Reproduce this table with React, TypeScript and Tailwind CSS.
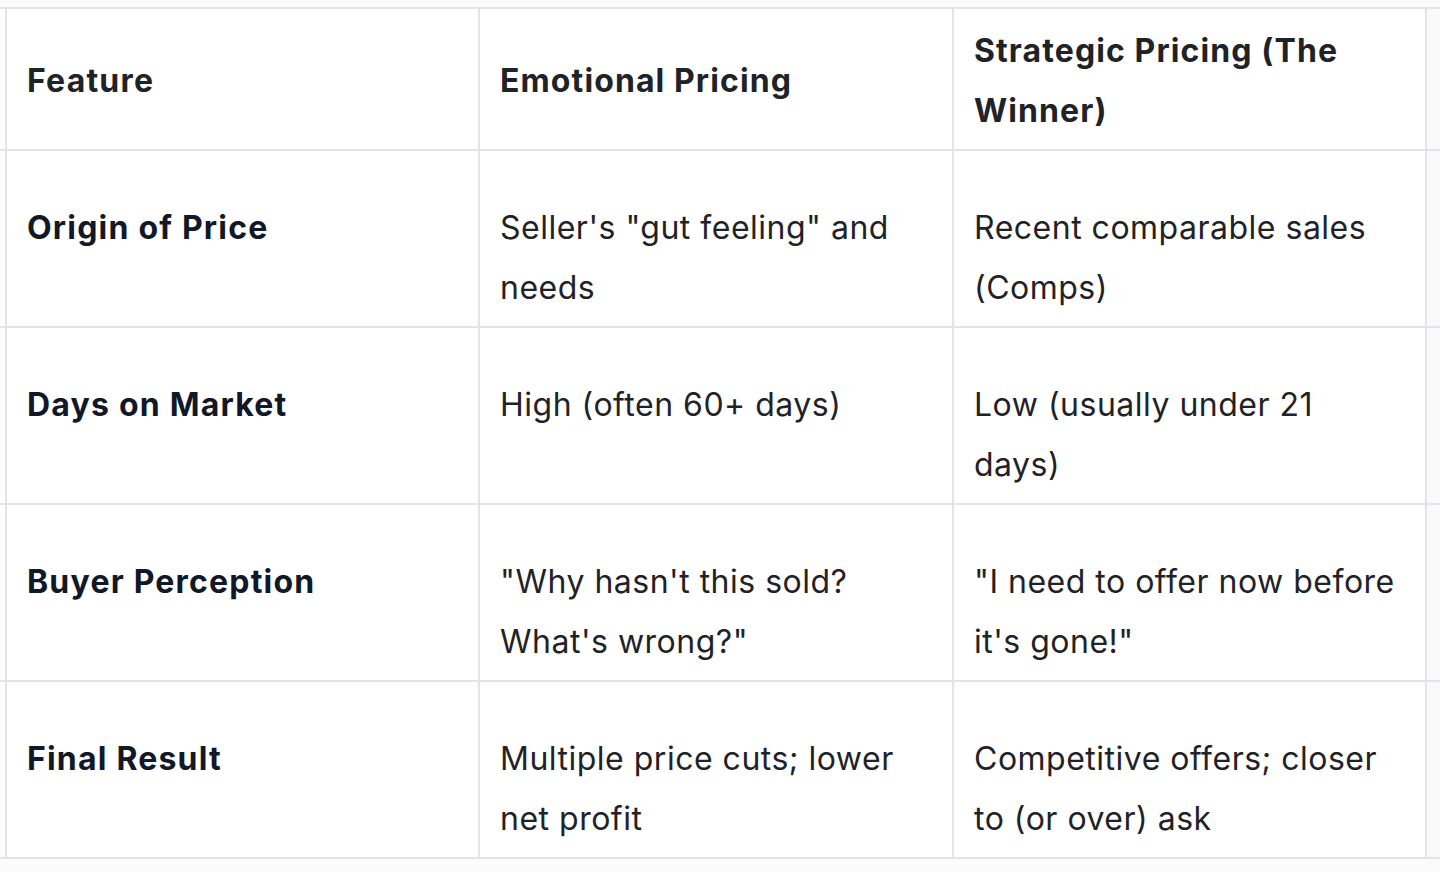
import React from "react";

const rows: [string, string, string][] = [
  ["Origin of Price", "Seller's \"gut feeling\" and needs", "Recent comparable sales (Comps)"],
  ["Days on Market", "High (often 60+ days)", "Low (usually under 21 days)"],
  ["Buyer Perception", "\"Why hasn't this sold? What's wrong?\"", "\"I need to offer now before it's gone!\""],
  ["Final Result", "Multiple price cuts; lower net profit", "Competitive offers; closer to (or over) ask"],
];

export default function App() {
  return (
    <div
      className="w-[1440px] h-[872px] overflow-hidden bg-[#fbfbfc]"
      style={{ fontFamily: "Inter, 'Noto Sans', sans-serif" }}
    >
      <div className="mt-[7px] grid grid-cols-[5px_471px_472px_471px_1fr] gap-[2px] py-[2px] bg-[#e3e3e8] text-[32px] leading-[60px] tracking-[0.5px]">
        <div className="bg-white" />
        <div className="bg-white px-[20px] pt-[12px] pb-[8px] flex items-center font-bold tracking-[1.2px] text-[#1f2328]">Feature</div>
        <div className="bg-white px-[20px] pt-[12px] pb-[8px] flex items-center font-bold tracking-[1.1px] text-[#1f2328]">Emotional Pricing</div>
        <div className="bg-white px-[20px] pt-[12px] pb-[8px] flex items-center font-bold tracking-[1.1px] text-[#1f2328]">Strategic Pricing (The Winner)</div>
        <div className="bg-[#fafafb]" />
        {rows.map((r) => (
          <React.Fragment key={r[0]}>
            <div className="bg-white h-[175px]" />
            <div className="bg-white h-[175px] px-[20px] pt-[47px] pb-[8px] font-bold tracking-[1.2px] text-[#111827]">{r[0]}</div>
            <div className="bg-white h-[175px] px-[20px] pt-[47px] pb-[8px] text-[#1f2328]">{r[1]}</div>
            <div className="bg-white h-[175px] px-[20px] pt-[47px] pb-[8px] text-[#1f2328]">{r[2]}</div>
            <div className="bg-[#fafafb] h-[175px]" />
          </React.Fragment>
        ))}
      </div>
    </div>
  );
}
